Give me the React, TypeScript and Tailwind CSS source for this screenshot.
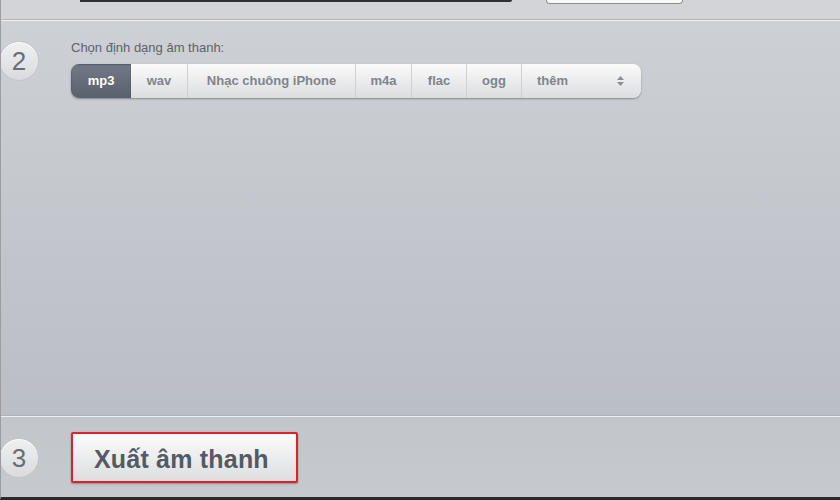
export default function App() {
  const formats = [
    { label: "mp3", w: "w-[60px]", active: true },
    { label: "wav", w: "w-[57px]" },
    { label: "Nhạc chuông iPhone", w: "w-[168px]" },
    { label: "m4a", w: "w-[56px]" },
    { label: "flac", w: "w-[55px]" },
    { label: "ogg", w: "w-[55px]" },
  ];

  return (
    <div className="relative flex h-[500px] w-[840px] flex-col overflow-hidden border-b-[3px] border-l border-b-[#2a2a2a] border-l-[#9a9da2] bg-[#c7cacf] font-['Liberation_Sans',Arial,sans-serif]">
      {/* top strip: end of step 1 */}
      <div className="flex h-[19px] shrink-0 items-start bg-[#d3d4d7]">
        <div className="ml-[79px] h-[2px] w-[432px] rounded-br-[6px] bg-[#2f3033]" />
        <div className="ml-[34px] h-[4px] w-[137px] rounded-b-[5px] border-x border-b border-[#8c8e92] bg-[#f8f8f8]" />
      </div>
      <div className="h-px shrink-0 bg-[#b4b6ba]" />
      <div className="h-px shrink-0 bg-[#eef0f2]" />

      {/* step 2 */}
      <div className="relative flex h-[394px] shrink-0 flex-col bg-gradient-to-b from-[#cdd0d5] to-[#babec5] pl-[70px] pt-[19px]">
        <div className="absolute left-[-2px] top-[20px] flex h-[40px] w-[40px] items-center justify-center rounded-full border border-[#c2c5c9] bg-gradient-to-b from-[#eef0f2] to-[#d9dbde] text-[26px] text-[#6a6d72] shadow-[inset_0_1px_0_#fff]">
          2
        </div>
        <p className="text-[13px] leading-[16px] text-[#5f6267]">Chọn định dạng âm thanh:</p>
        <div className="mt-[8px] flex h-[34px] w-[570px] overflow-hidden rounded-[8px] bg-gradient-to-b from-[#fbfbfb] to-[#dcdddf] shadow-[0_1px_2px_rgba(0,0,0,0.35)]">
          {formats.map((f) => (
            <div
              key={f.label}
              className={
                f.active
                  ? `${f.w} flex items-center justify-center bg-gradient-to-b from-[#737a87] to-[#5a616d] text-[13px] font-bold text-white shadow-[inset_0_1px_2px_rgba(0,0,0,0.3)]`
                  : `${f.w} flex items-center justify-center border-r border-[#cfd0d3] text-[13px] font-bold text-[#80848b]`
              }
            >
              {f.label}
            </div>
          ))}
          <div className="flex flex-1 items-center justify-between pl-[15px] pr-[16px] text-[13px] font-bold text-[#80848b]">
            <span>thêm</span>
            <svg width="9" height="12" viewBox="0 0 9 12">
              <path d="M4.5 1 L8 5 H1 Z" fill="#8a8e94" />
              <path d="M4.5 11 L8 7 H1 Z" fill="#8a8e94" />
            </svg>
          </div>
        </div>
      </div>
      <div className="h-px shrink-0 bg-[#aeb2b8]" />
      <div className="h-px shrink-0 bg-[#eceef1]" />

      {/* step 3 */}
      <div className="relative flex flex-1 items-start bg-gradient-to-b from-[#c2c5ca] to-[#c6c9ce] pl-[70px] pt-[15px]">
        <div className="absolute left-[-2px] top-[21px] flex h-[40px] w-[40px] items-center justify-center rounded-full border border-[#c2c5c9] bg-gradient-to-b from-[#eef0f2] to-[#d9dbde] text-[26px] text-[#6a6d72] shadow-[inset_0_1px_0_#fff]">
          3
        </div>
        <button className="flex h-[51px] w-[227px] items-center justify-start rounded-[2px] border-2 border-[#e2202a] bg-gradient-to-b from-[#fbfbfb] to-[#dddee0] pl-[21px] pt-[4px] text-[25px] font-bold tracking-[0.2px] text-[#535a65] shadow-[0_1px_2px_rgba(0,0,0,0.3)]">
          Xuất âm thanh
        </button>
      </div>
    </div>
  );
}
